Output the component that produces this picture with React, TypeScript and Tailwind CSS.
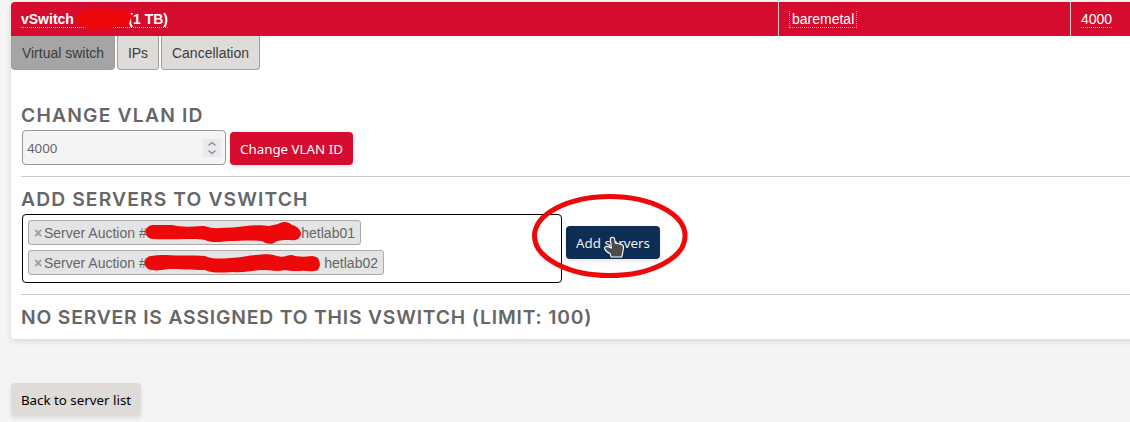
import React from 'react';

const tab =
  "flex h-[34px] items-center justify-center whitespace-nowrap rounded-b-[4px] border border-t-0 text-[14px] leading-none text-[#3b3b3b]";
const action =
  "flex h-[33px] items-center justify-center rounded-[4px] pt-[2px] font-['Noto_Sans',sans-serif] text-[13.333px] leading-none shadow-[0_2px_4px_rgba(0,0,0,0.1)]";

function Heading({ children, className }: { children: React.ReactNode; className: string }) {
  return (
    <h2 className={`whitespace-nowrap font-['Inter',sans-serif] text-[19.3px] font-semibold leading-[24px] text-[#666] ${className}`}>
      {children}
    </h2>
  );
}

function Chip({ name, className }: { name: string; className: string }) {
  return (
    <li className={`flex h-[25px] items-center justify-between rounded-[3px] border border-[#aaa] bg-[#e4e4e4] pl-[5px] pr-[5px] text-[14px] leading-none text-[#666] ${className}`}>
      <span className="flex items-center">
        <span className="mr-[2px] w-[8px] font-bold text-[#999]">×</span>
        <span>Server Auction #</span>
      </span>
      <span>{name}</span>
    </li>
  );
}

function Annotations() {
  return (
    <svg className="pointer-events-none absolute left-0 top-0" width="1130" height="422" viewBox="0 0 1130 422">
      <path fill="#ed0909" d="M76 19C76 14 80 12 86 11C93 8 101 8 108 10C115 9 122 10 126 12C133 13 133 17 130 20C130 25 124 26 116 27C109 28 101 31 94 30C86 28 76 26 76 19Z" />
      <path fill="#ed0909" d="M153 225H172C180 227 190 227 202 226C208 226 210 229 219 228C229 228 237 227 246 226C254 225 263 225 269 226C276 224 277 225 280 223C284 221 289 222 292 225C297 226 301 230 301 234C300 239 296 241 290 240C283 240 277 240 274 243C269 245 265 243 262 241C250 240 240 241 230 241C219 242 211 243 205 240C195 238 185 240 153 239C143 238 143 226 153 225Z" />
      <path fill="#ed0909" d="M151 256C157 255 160 255 165 255C180 256 193 255 205 256C211 259 220 259 230 258C241 258 249 255 256 255C266 254 271 254 277 256C284 258 287 255 292 255C297 257 304 257 312 256C320 256 322 267 317 270C311 273 306 270 301 271C294 271 289 271 284 270C276 272 273 270 264 270C252 270 246 273 233 272C220 273 211 273 205 270C191 270 180 269 169 269C162 270 156 271 152 270C142 269 143 257 151 256Z" />
      <ellipse cx="609.8" cy="236" rx="75.3" ry="39.5" fill="none" stroke="#ed0909" strokeWidth="5" />
      <path
        d="M610.3 239.4C610.3 236.6 614.5 236.5 614.7 239.4L615.4 243.3L621 244.3C623 244.8 623.8 246.4 623.4 248.5L622.5 254L621.7 257H611.2L610.2 253.6C607.9 252.7 605.3 250.4 604.6 248.5C604.1 246.7 606.6 246 608.3 246.7L611.4 248.1Z"
        fill="#4b4b4b"
        stroke="white"
        strokeWidth="1.1"
        strokeLinejoin="round"
      />
    </svg>
  );
}

export default function App() {
  return (
    <main className="relative h-[422px] w-full overflow-hidden bg-[#f4f4f4] pl-[11px] pt-[2px] font-['Liberation_Sans',sans-serif]">
      <section className="h-[337px] w-[1130px] rounded-[4px] bg-white shadow-[0_2px_6px_rgba(0,0,0,0.12)]">
        <header className="flex h-[34px] rounded-tl-[4px] bg-[#d50c2d] text-[14px] leading-none text-white">
          <div className="w-[767px] pl-[10px] pt-[9px]">
            <div className="flex h-[17px] w-[147px] justify-between border-b border-dotted border-white/60 pt-[1px] font-bold">
              <span>vSwitch</span>
              <span>(1 TB)</span>
            </div>
          </div>
          <div className="w-[292px] border-l border-[#ccc] pl-[10px] pt-[9px]">
            <span className="flex h-[17px] w-[68px] border border-t-0 border-dotted border-white/60 pl-[2px] pt-[1px]">baremetal</span>
          </div>
          <div className="border-l border-[#ccc] pl-[10px] pt-[9px]">
            <span className="flex h-[17px] border-b border-dotted border-white/60 pt-[1px]">4000</span>
          </div>
        </header>
        <nav className="flex h-[34px] gap-[2px]">
          <button className={`${tab} w-[104px] border-[#a0a0a0] bg-[#a5a5a5]`}>Virtual switch</button>
          <button className={`${tab} w-[42px] border-[#a0a0a0] bg-[#dfdbd8]`}>IPs</button>
          <button className={`${tab} w-[99px] border-[#a0a0a0] bg-[#dfdbd8]`}>Cancellation</button>
        </nav>
        <div className="pl-[10px] pt-[33px]">
          <Heading className="tracking-[1.2px]">CHANGE VLAN ID</Heading>
          <div className="mt-[3px] flex h-[35px] items-end gap-[4px] pl-[1px]">
            <div className="flex h-[35px] w-[204px] items-center justify-between rounded-[4px] border border-[#999] bg-[#f4f4f4] pl-[4px] pr-[4px]">
              <span className="pt-[2px] font-['Noto_Sans',sans-serif] text-[13.333px] leading-none text-[#666]">4000</span>
              <span className="flex h-[18px] w-[18px] items-center justify-center bg-[#e9e9ed]">
                <svg width="18" height="18" viewBox="0 0 18 18" fill="none" stroke="#8f8f9d" strokeWidth="1.5">
                  <path d="m5.5 6.5 3.5-3 3.5 3M5.5 11.5l3.5 3 3.5-3" />
                </svg>
              </span>
            </div>
            <button className={`${action} w-[123px] bg-[#d50c2d] text-white`}>Change VLAN ID</button>
          </div>
          <hr className="mt-[11px] border-t border-[#ccc]" />
          <Heading className="mt-[10px] tracking-[1.12px]">ADD SERVERS TO VSWITCH</Heading>
          <div className="mt-[3px] flex h-[69px] items-start gap-[4px] pl-[1px]">
            <ul className="flex h-[69px] w-[540px] flex-col items-start gap-[5px] rounded-[4px] border border-black bg-white pl-[5px] pt-[5px]">
              <Chip className="w-[333px]" name="hetlab01" />
              <Chip className="w-[356px]" name=") hetlab02" />
            </ul>
            <button className={`${action} mt-[12px] w-[94px] bg-[#0c2d54] text-[#eee]`}>Add servers</button>
          </div>
          <hr className="mt-[11px] border-t border-[#ccc]" />
          <Heading className="mt-[10px] tracking-[0.83px]">NO SERVER IS ASSIGNED TO THIS VSWITCH (LIMIT: 100)</Heading>
        </div>
      </section>
      <button className={`${action} mt-[44px] w-[130px] bg-[#dfdbd8] text-black`}>Back to server list</button>
      <Annotations />
    </main>
  );
}
